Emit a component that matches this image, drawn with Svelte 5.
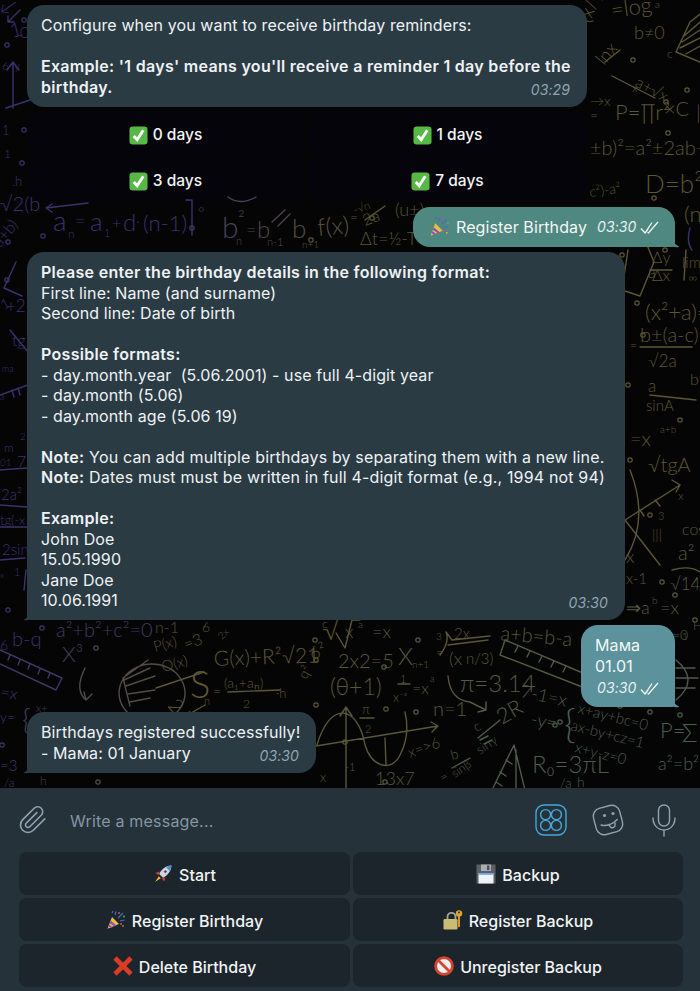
<script lang="ts">
  // wallpaper doodles: [text, x, baseline y, font size, rotation]
  const doodles: [string, number, number, number, number][] = [
    ['\u2190', 4, 18, 20, -35], ['1', 12, 38, 20, -15], ['0', 20, 38, 16, 0], ['6', 2, 70, 12, 0], ['y', 14, 70, 12, 0],
    ['1', 2, 135, 13, 0], ['1', 4, 158, 12, 0], ['.h', 12, 186, 13, 0], ['\u221A2(b', 0, 211, 20, 0],
    ['(x/y)', 590, 24, 20, -70], ['=log', 612, 18, 22, -8], ['a', 655, 8, 10, 0], ['b\u22600', 634, 39, 18, 0], ['c', 667, 58, 12, 0],
    ['lnx', 604, 66, 18, -50], ['a+\u221Ax', 634, 86, 16, 28], ['x', 632, 92, 12, 0], ['\u00D7C', 664, 116, 20, 0], ['P=\u220Fr\u00B2', 615, 120, 22, 0], ['|', 696, 120, 20, 0],
    ['\u00B1b)\u00B2=a\u00B2\u00B12ab+', 590, 155, 20, 0], ['D=b\u00B2-4', 645, 193, 26, 0], ['c\u00B2)-a\u00B2', 590, 197, 14, -8],
    ['a', 53, 231, 28, 0], ['n', 68, 238, 12, 0], ['=', 75, 227, 18, 0], ['a', 90, 231, 26, 0], ['1', 104, 237, 11, 0], ['+', 112, 229, 16, 0], ['d', 123, 231, 24, 0], ['\u00B7', 136, 227, 16, 0], ['(n-1)', 143, 231, 22, 0], ['\u00B0', 198, 218, 16, 0],
    ['b', 222, 238, 30, 0], ['\u00B2', 238, 226, 20, 0], ['n', 236, 245, 11, 0], ['=', 246, 236, 18, 0], ['b', 257, 238, 24, 0], ['n-1', 267, 246, 11, 0], ['b', 292, 238, 26, 0], ['n+1', 302, 248, 10, 0], ['f(x)', 318, 236, 24, -5], ['=', 350, 222, 14, 0], ['-\u221An', 355, 214, 11, -20], ['2a', 365, 226, 16, -20],
    ['\u0394t=\u00BD-T', 360, 245, 18, 0], ['(u\u00B1)', 395, 216, 18, 0],
    ['a', 648, 278, 16, 0], ['\u0394y', 652, 263, 16, 0], ['\u0394x', 652, 281, 16, 0], ['lim', 682, 268, 15, 0], ['\u221E', 688, 282, 12, 0],
    ['(x\u00B2+a)=', 645, 320, 22, 0], ['b\u00B1(a-c)', 640, 342, 20, 0], ['\u221A2a', 648, 367, 17, 0], ['=', 630, 350, 12, 0], ['a', 648, 392, 17, 0], ['sinA', 646, 411, 15, 0], ['b', 690, 385, 16, 0],
    ['=x', 630, 446, 20, 0], ['a+b', 660, 433, 10, 0], ['\u221AtgA', 648, 472, 20, 0], ['3', 658, 520, 11, 0], ['x', 678, 500, 12, 0], ['|||', 652, 540, 14, 0], ['cos', 682, 535, 16, 0], ['a\u00B2', 678, 560, 20, 0], ['\u221A14', 670, 590, 17, 0],
    ['x', 626, 563, 18, 0], ['x-1', 626, 584, 15, 0], ['\u21D2a', 626, 614, 18, 0], ['b', 652, 604, 10, 0], ['=x', 660, 614, 18, 0], ['=0', 672, 640, 14, 0], ['H', 693, 630, 12, 0],
    ['P=', 660, 738, 22, 0], ['\u03A3', 682, 742, 26, 0], ['a\u00B2=b\u00B2+', 658, 770, 18, 0],
    ['\u221A', 322, 640, 28, 0], ['x', 345, 638, 18, 0], ['a', 358, 628, 10, 0], ['=x', 372, 638, 18, 0], ['2x2=5', 338, 668, 20, 0], ['c', 322, 628, 12, 0],
    ['X', 398, 665, 24, 0], ['n+1', 412, 668, 10, 0], ['=', 436, 657, 12, 0], ['2x', 454, 639, 15, 0], ['(x', 449, 665, 18, 0], ['n/3)', 466, 664, 15, 0], ['3', 436, 640, 10, 0],
    ['a+b=b-a', 500, 640, 20, 5], ['\u03C0=3.14', 460, 692, 24, 0], ['7-1=x', 520, 697, 18, 12], ['(\u03B8+1)', 330, 695, 23, 0], ['1', 400, 683, 11, 0], ['x\u207B\u1D43', 393, 702, 13, 0], ['=x', 412, 694, 16, 0], ['a', 430, 682, 9, 0],
    ['n=1', 433, 716, 20, 0], ['-y=', 530, 725, 18, 10], ['{', 564, 738, 40, 0], ['x+ay+bc=0', 577, 713, 15, 14], ['ax-by+cz=1', 570, 730, 15, 14], ['x+y-z=0', 574, 752, 15, 14],
    ['\u03C0', 362, 714, 13, 0], ['2', 365, 733, 11, 0], ['x=>6', 410, 758, 15, -20], ['-1', 345, 771, 11, 0], ['13x7', 375, 785, 18, 0], ['x', 320, 782, 13, 0],
    ['2R', 502, 725, 22, -30], ['c', 476, 732, 14, -25], ['sin\u03B3', 480, 755, 13, -35], ['b', 452, 760, 14, -15], ['sin\u03B2', 455, 778, 12, -35], ['=', 443, 782, 12, -30], ['R\u2080=3\u03C0L', 532, 773, 24, 0], ['/a', 560, 788, 13, 0], ['h', 577, 787, 14, 0],
    ['a\u00B2+b\u00B2+c\u00B2=0', 56, 637, 20, 0], ['n-1', 155, 633, 16, 0], ['6', 202, 632, 14, 0], ['2x', 222, 640, 10, -45], ['X\u00B3', 62, 662, 22, 0], ['b-q', 12, 646, 20, 0],
    ['P(x)', 155, 652, 15, -15], ['Q(x)', 163, 672, 15, -15], ['=3', 186, 650, 16, -20], ['G(x)+R\u00B2\u221A21', 214, 666, 21, -2], ['6\u00B2', 312, 660, 18, -20], ['q\u00B2', 306, 680, 14, -60],
    ['S', 190, 698, 38, 0], ['n', 204, 705, 11, 0], ['=', 213, 696, 14, 0], ['(a\u2081+a\u2099)', 224, 688, 14, 0], ['2', 243, 708, 12, 0], ['\u00B7h', 276, 698, 13, 0], ['2/a', 167, 706, 20, 50],
    ['=x', 0, 697, 16, 10], ['y=', 0, 722, 14, 0], ['{', 22, 730, 30, 0], ['x+', 36, 712, 11, 0], ['=3', 0, 771, 15, 0], ['/a', 4, 787, 12, 0], ['h', 40, 785, 12, 0], ['6', 0, 650, 14, 0],
    ['a+b)', 0, 248, 16, -50], ['1', 4, 310, 14, -30], ['+2', 6, 312, 17, 0], ['tg', 12, 346, 16, 0], ['ma', 2, 372, 9, 0], ['a', 0, 400, 9, 0], ['2', 20, 440, 10, 0], ['m', 4, 452, 12, 0], ['7', 17, 467, 16, 0], ['01', 0, 466, 10, 0], ['2a\u00B2', 1, 500, 15, 0], ['tg(-x', 0, 525, 13, 0], ['2sin', 2, 555, 15, 0], ['x', 0, 578, 8, 0], ['1', 14, 576, 11, 0],
    ['1', 682, 640, 10, 0], ['(n', 684, 222, 22, 0], ['\u2192x', 590, 106, 14, 0], ['=', 590, 120, 14, 0],
  ];

  // hand drawn shapes: [path, x, y] where x/y picks the tint
  const shapes: [string, number, number][] = [
    ['M8 22 L20 10 M8 22 L14 22 M8 22 L8 16', 10, 20],
    ['M13 62 V108 M7 70 L13 62 L19 70 M6 108 L30 100', 10, 90],
    ['M690 22 L676 52 L700 62 M682 42 L700 30 M680 48 L700 38 M686 54 L700 46 M684 36 L700 22 M700 14 L690 22', 690, 40],
    ['M612 76 L655 98 M605 62 L620 50', 630, 80],
    ['M46 208 L88 203 M46 208 L52 204 M46 208 L52 212 M192 200 V235 M192 200 H186', 60, 210],
    ['M228 197 Q240 206 256 197 M272 222 L285 210 M278 226 L290 214', 250, 205],
    ['M365 220 L385 206', 360, 215],
    ['M640 347 H692 M650 270 H672 M686 250 L684 280', 660, 340],
    ['M636 238 L645 240 L654 262 L640 296 L622 290 L628 250 M650 395 L696 400', 640, 270],
    ['M630 470 Q650 520 625 560 M625 520 L680 485 M625 520 L660 565 M680 485 L672 480 M680 485 L676 492 M640 510 L644 516 M655 500 L660 506', 640, 510],
    ['M672 570 Q690 565 700 572', 680, 570],
    ['M676 660 Q700 680 676 700 M676 668 H695 M676 678 H698 M676 688 H695', 685, 680],
    ['M505 640 L590 676 L590 690 L500 655 Z M518 646 L515 652 M530 651 L527 657 M542 656 L539 662 M554 661 L551 667 M566 666 L563 672', 540, 660],
    ['M0 650 L62 678 L56 690 L0 664 M10 655 L8 660 M20 660 L18 665 M30 664 L28 669 M40 669 L38 674 M50 673 L48 678', 30, 670],
    ['M152 664 a33 29 0 1 0 .1 0 M123 678 L148 660 M123 678 L130 706 M126 686 L155 676 M128 694 L155 690 M124 680 L150 668 M130 702 L150 698 M85 668 Q74 690 86 700 L84 692 M86 700 L92 694', 120, 680],
    ['M156 688 L204 672 M228 692 L280 690 M170 725 L205 705 M398 684 H410 M448 645 L488 640 M440 655 Q450 642 446 632 L452 640 L490 636', 200, 690],
    ['M336 633 L345 648 L352 620 H360', 340, 640],
    ['M346 707 V790 M340 716 L346 707 L352 716 M316 746 L438 726 M438 726 L431 722 M438 726 L432 732 M317 745 C330 700 358 705 365 745 C372 768 392 772 400 755 C408 740 408 725 405 712 M385 738 L386 765 M360 718 H374', 360, 740],
    ['M448 676 Q450 700 470 702 L486 710 M486 710 V702 M486 710 L478 712', 460, 700],
    ['M514 745 L492 790 H525 Z M516 750 V790 M506 760 L512 764 M500 772 L506 776 M496 782 L502 786 M480 740 L488 736 M484 744 L492 740 M478 738 L500 720 M452 768 L470 758', 505, 770],
    ['M690 228 Q686 242 692 250 M10 330 L28 352 M0 395 L28 385 M12 390 L14 397 M18 388 L20 395 M0 470 L27 468 M0 505 L27 507 M0 527 L27 527 M0 560 L25 558 M24 590 L26 570 M16 262 L4 288 L22 296', 10, 400],
  ];
  const dots: [number, number][] = [
    [7, 45], [24, 20], [24, 130], [22, 163], [43, 236], [192, 228], [311, 240], [372, 218], [8, 242], [7, 280], [654, 198], [687, 90], [633, 60], [666, 102], [668, 133], [637, 303], [622, 255], [643, 335], [628, 385], [680, 420], [630, 460], [650, 515], [662, 582], [675, 595],
    [42, 628], [96, 648], [315, 640], [350, 617], [418, 640], [384, 667], [316, 705], [386, 709], [416, 712], [560, 722], [620, 706], [385, 782], [345, 742], [98, 782], [670, 640], [695, 620], [680, 715], [650, 712], [316, 660], [665, 250], [555, 725], [8, 610], [2, 745],
  ];

  // tint drifts from purple on the left to olive, greener low on the right
  function tint(x: number, y: number) {
    let t = Math.min(1, Math.max(0, (x + y * 0.35 - 240) / 170));
    const g = Math.min(1, Math.max(0, (y - 500) / 260)) * Math.min(1, Math.max(0, (x - 300) / 300));
    const r = 58 + (92 - 58) * t - 22 * g;
    const gr = 50 + (86 - 50) * t + 8 * g;
    const b = 110 + (52 - 110) * t + 30 * g;
    return `rgb(${Math.round(r)},${Math.round(gr)},${Math.round(b)})`;
  }

  const choices = ['0 days', '1 days', '3 days', '7 days'];
  const commands: [string, string][] = [
    ['rocket', 'Start'], ['floppy', 'Backup'],
    ['popper', 'Register Birthday'], ['lock', 'Register Backup'],
    ['cross', 'Delete Birthday'], ['noentry', 'Unregister Backup'],
  ];
</script>

{#snippet emoji(name)}
  <svg class="emoji" viewBox="0 0 20 20" aria-hidden="true">
    {#if name === 'check'}
      <rect x="0.5" y="0.5" width="19" height="19" rx="3.5" fill="#57b846" />
      <path d="M5 10.5 L8.6 14.5 L15 4.5" fill="none" stroke="#fff" stroke-width="3" />
    {:else if name === 'popper'}
      <path d="M1.5 18.8 L6 7 L13 14 Z" fill="#e8bf3f" />
      <path d="M3.6 13.2 L8.8 16.6 L10.4 15.6 L4.6 10.6 Z" fill="#8a4fc4" />
      <path d="M2.5 16.2 L5 18 L6.6 17.2 L3.2 14.4 Z" fill="#8a4fc4" />
      <path d="M9 5 L10 1.5 M12 8 L17 3 M14 11 L18.5 10 M6 3 L7 1" stroke="#3f6fc8" stroke-width="1.2" fill="none" />
      <circle cx="15" cy="14" r="1" fill="#d6476b" /><circle cx="13" cy="3" r="1" fill="#d6476b" /><circle cx="18" cy="6.5" r=".9" fill="#5fb35a" /><circle cx="17" cy="16" r=".8" fill="#e8bf3f" />
    {:else if name === 'rocket'}
      <path d="M18.4 1.6 C13.5 1.6 8.6 5 6.2 10 L10 13.8 C15 11.4 18.4 6.5 18.4 1.6 Z" fill="#c9d6e2" />
      <path d="M18.4 1.6 C16.4 1.6 14.6 2.2 13 3.2 L16.8 7 C17.8 5.4 18.4 3.6 18.4 1.6 Z" fill="#4d8fd0" />
      <circle cx="12.4" cy="7.6" r="1.7" fill="#7a2e3a" stroke="#eef" stroke-width=".6" />
      <path d="M6.6 7.4 L2.4 9 L5.6 11.2 Z M12.6 13.4 L11 17.6 L8.8 14.4 Z" fill="#d23c2e" />
      <path d="M5.8 12.2 L7.8 14.2 L2 18 Z" fill="#f2b632" />
    {:else if name === 'floppy'}
      <path d="M0.5 0.5 H19.5 V19.5 H0.5 Z" fill="#5c6066" />
      <rect x="5" y="0.5" width="10" height="6.5" fill="#a9adb2" /><rect x="11" y="1.5" width="2.4" height="4.5" fill="#4a4d52" />
      <rect x="2.5" y="9" width="15" height="10.5" fill="#eef1f6" /><rect x="2.5" y="9" width="15" height="1.8" fill="#6ea4e0" />
    {:else if name === 'lock'}
      <path d="M4.5 9 V6.8 a4 4 0 0 1 8 0 V9" fill="none" stroke="#a4a7a0" stroke-width="1.8" />
      <rect x="0.5" y="9" width="14" height="10.5" rx="1.2" fill="#c8bd72" />
      <circle cx="16" cy="3.4" r="3.2" fill="#e0a52f" /><circle cx="16" cy="2.6" r="1" fill="#2a3138" />
      <path d="M15 6 H17 V16.5 L15.8 17.6 L15 16.5 Z" fill="#d9992a" />
    {:else if name === 'cross'}
      <path d="M2 2 L18 18 M18 2 L2 18" stroke="#dc3b26" stroke-width="4.6" fill="none" />
    {:else if name === 'noentry'}
      <circle cx="10" cy="10" r="8.4" fill="#eef0f0" stroke="#d8432f" stroke-width="2.8" />
      <path d="M4.2 4.2 L15.8 15.8" stroke="#d8432f" stroke-width="2.8" />
    {/if}
  </svg>
{/snippet}

{#snippet ticks()}
  <svg class="ticks" viewBox="0 0 19 13" aria-hidden="true">
    <path d="M1 7.5 L5 12 L12 1.5 M7.5 11.5 L8.5 12 L18 1 M5 12 L8 8" fill="none" stroke="currentColor" stroke-width="1.3" />
  </svg>
{/snippet}

<div class="screen">
  <div class="chat">
    <svg class="wallpaper" width="700" height="788" aria-hidden="true">
      {#each shapes as [d, x, y]}
        <path {d} fill="none" stroke={tint(x, y)} stroke-width="1.4" stroke-linecap="round" stroke-linejoin="round" />
      {/each}
      {#each dots as [x, y]}
        <circle cx={x} cy={y} r="2.2" fill="none" stroke={tint(x, y)} stroke-width="1.2" />
      {/each}
      {#each doodles as [t, x, y, s, r]}
        <text {x} {y} font-size={s} fill={tint(x, y)} transform="rotate({r} {x} {y})">{t}</text>
      {/each}
    </svg>

    <div class="bubble in first">
      <div>Configure when you want to receive birthday reminders:</div>
      <div class="blank"></div>
      <div class="b">Example: '1 days' means you'll receive a reminder 1 day before the birthday.</div>
      <span class="time">03:29</span>
    </div>

    <div class="inline-kb">
      {#each choices as c}
        <div class="kb-btn">{@render emoji('check')}<span>{c}</span></div>
      {/each}
    </div>

    <div class="bubble out green one">
      <span class="out-row">{@render emoji('popper')}<span class="out-label">Register Birthday</span><span class="time-in">03:30</span>{@render ticks()}</span>
      <svg class="tail right" width="14" height="14" viewBox="0 0 14 14" aria-hidden="true"><path d="M0 0 C1 6 4 10 9 12.4 C10 13 8 13.4 6 13.2 C3 13 0 12.4 0 12 Z" fill="#4f8880" /></svg>
    </div>

    <div class="bubble in second">
      <div class="b">Please enter the birthday details in the following format:</div>
      <div>First line: Name (and surname)</div>
      <div>Second line: Date of birth</div>
      <div class="blank"></div>
      <div class="b">Possible formats:</div>
      <div>- day.month.year&nbsp; (5.06.2001) - use full 4-digit year</div>
      <div>- day.month (5.06)</div>
      <div>- day.month age (5.06 19)</div>
      <div class="blank"></div>
      <div class="note"><span class="b">Note:</span> You can add multiple birthdays by separating them with a new line.</div>
      <div class="note"><span class="b">Note:</span> Dates must must be written in full 4-digit format (e.g., 1994 not 94)</div>
      <div class="blank"></div>
      <div class="b">Example:</div>
      <div>John Doe</div>
      <div>15.05.1990</div>
      <div>Jane Doe</div>
      <div>10.06.1991</div>
      <span class="time">03:30</span>
      <svg class="tail left" width="14" height="14" viewBox="0 0 14 14" aria-hidden="true"><path d="M14 0 C13 6 10 10 5 12.4 C4 13 6 13.4 8 13.2 C11 13 14 12.4 14 12 Z" fill="#2a3b44" /></svg>
    </div>

    <div class="bubble out blue two">
      <div>Мама</div>
      <div>01.01</div>
      <span class="out-row low"><span class="time-in">03:30</span>{@render ticks()}</span>
      <svg class="tail right" width="14" height="14" viewBox="0 0 14 14" aria-hidden="true"><path d="M0 0 C1 6 4 10 9 12.4 C10 13 8 13.4 6 13.2 C3 13 0 12.4 0 12 Z" fill="#5b929c" /></svg>
    </div>

    <div class="bubble in third">
      <div>Birthdays registered successfully!</div>
      <div>- Мама: 01 January</div>
      <span class="time">03:30</span>
      <svg class="tail left" width="14" height="14" viewBox="0 0 14 14" aria-hidden="true"><path d="M14 0 C13 6 10 10 5 12.4 C4 13 6 13.4 8 13.2 C11 13 14 12.4 14 12 Z" fill="#2a3b44" /></svg>
    </div>
  </div>

  <div class="composer">
    <div class="input-row">
      <svg class="clip" width="30" height="34" viewBox="0 0 24 24" aria-hidden="true">
        <path d="M21.44 11.05l-9.19 9.19a6 6 0 0 1-8.49-8.49l9.19-9.19a4 4 0 0 1 5.66 5.66l-9.2 9.19a2 2 0 0 1-2.83-2.83l8.49-8.48" fill="none" stroke="#8fa3b1" stroke-width="1.3" stroke-linecap="round" />
      </svg>
      <span class="placeholder">Write a message...</span>
      <svg class="grid-ic" width="32" height="32" viewBox="0 0 32 32" aria-hidden="true">
        <g fill="none" stroke="#45a8d8" stroke-width="1.4">
          <rect x="1" y="1" width="30" height="30" rx="8" />
          <circle cx="10.6" cy="10.6" r="5" /><circle cx="21.4" cy="10.6" r="5" />
          <circle cx="10.6" cy="21.4" r="5" /><circle cx="21.4" cy="21.4" r="5" />
        </g>
      </svg>
      <svg class="face" width="34" height="34" viewBox="0 0 34 34" aria-hidden="true">
        <g fill="none" stroke="#8fa3b1" stroke-width="1.4" transform="rotate(-15 17 17)">
          <rect x="3.5" y="3.5" width="27" height="27" rx="8" />
          <path d="M9 20 C14 23 20 22.5 26 19" stroke-linecap="round" />
          <path d="M17 22 C17 27 23 27 23 21" />
        </g>
        <circle cx="13.5" cy="12.5" r="1.6" fill="#8fa3b1" /><circle cx="22" cy="10.5" r="1.6" fill="#8fa3b1" />
      </svg>
      <svg class="mic" width="24" height="33" viewBox="0 0 24 33" aria-hidden="true">
        <g fill="none" stroke="#8fa3b1" stroke-width="1.4" stroke-linecap="round">
          <rect x="6.5" y="1" width="11" height="21" rx="5.5" />
          <path d="M1 14 C1 21 6 26 12 26 C18 26 23 21 23 14 M12 26 V32" />
        </g>
      </svg>
    </div>
    <div class="commands">
      {#each commands as [icon, label]}
        <div class="cmd">{@render emoji(icon)}<span>{label}</span></div>
      {/each}
    </div>
  </div>
</div>

<style>
  :global(body) { margin: 0; background: #050505; }
  .screen {
    width: 700px; height: 991px; display: flex; flex-direction: column; overflow: hidden;
    font-family: Inter, "Liberation Sans", sans-serif; font-size: 16px; line-height: 20.5px; color: #eef2f4;
  }
  .chat {
    position: relative; height: 788px; flex-shrink: 0; background: #050505; overflow: hidden;
    padding-top: 5px; box-sizing: border-box; display: flex; flex-direction: column;
  }
  .wallpaper { position: absolute; left: 0; top: 0; font-family: Lato, sans-serif; font-weight: 300; }
  .bubble {
    position: relative; box-sizing: border-box; padding: 10px 14px; border-radius: 17px;
    letter-spacing: 0.1px;
  }
  .bubble.in { background: #2a3b44; margin-left: 27px; }
  .first { width: 560px; }
  .second { width: 598px; height: 368px; margin-top: 5px; border-bottom-left-radius: 4px; }
  .third { width: 289px; margin-top: 5px; border-bottom-left-radius: 4px; }
  .b { font-weight: 600; letter-spacing: 0.3px; }
  .note { letter-spacing: 0.16px; }
  .blank { height: 20.5px; }
  .time {
    position: absolute; right: 17px; bottom: 8px; font-size: 14px; font-style: italic;
    color: #8fa5b3; line-height: 18px;
  }
  .inline-kb {
    display: grid; grid-template-columns: 277px 279px; column-gap: 4px; row-gap: 3px;
    margin: 5px 0 6px 27px;
  }
  .kb-btn {
    height: 43px; box-sizing: border-box; padding-top: 3px; display: flex; align-items: center; justify-content: center; gap: 5px;
    background: rgba(6, 4, 12, 0.88); border-radius: 8px; font-size: 15.5px; font-weight: 500; color: #f3f5f6;
  }
  .emoji { width: 19px; height: 19px; flex-shrink: 0; }
  .bubble.out { align-self: flex-end; margin-right: 25px; color: #f2f7f7; border-bottom-right-radius: 4px; }
  .green { background: #4f8880; height: 40px; width: 262px; }
  .green .emoji { width: 21px; height: 21px; margin-left: 2px; margin-top: -1px; }
  .blue { background: #5b929c; width: 94px; height: 82px; margin-top: 5px; }
  .out-row { display: flex; align-items: center; white-space: nowrap; }
  .out-row.low { padding-top: 2px; }
  .out-label { margin-left: 6px; }
  .time-in { font-size: 14px; font-style: italic; margin-left: 10px; color: #e6f0ef; }
  .blue .time-in { margin-left: 2px; }
  .ticks { width: 19px; height: 13px; margin-left: 4px; color: #f2f7f7; flex-shrink: 0; }
  .tail { position: absolute; bottom: -1px; }
  .tail.right { right: -9px; }
  .tail.left { left: -8px; }
  .composer { flex: 1; background: #25323a; display: flex; flex-direction: column; }
  .input-row { height: 64px; flex-shrink: 0; display: flex; align-items: center; padding-left: 18px; box-sizing: border-box; }
  .clip { flex-shrink: 0; }
  .placeholder { margin-left: 22px; padding-top: 2px; color: #8496a4; flex: 1; font-size: 16px; letter-spacing: 0.2px; }
  .grid-ic { margin-right: 24px; }
  .face { margin-right: 27px; }
  .mic { margin-right: 24px; }
  .commands {
    display: grid; grid-template-columns: 331px 330px; column-gap: 3px; row-gap: 3px;
    padding-left: 19px;
  }
  .cmd {
    height: 43px; box-sizing: border-box; padding-top: 3px; display: flex; align-items: center; justify-content: center; gap: 6px;
    background: #1c252b; border-radius: 8px; font-size: 16px; font-weight: 500; color: #f1f4f5;
  }
  .cmd .emoji { width: 20px; height: 20px; margin-top: -2px; }
</style>
